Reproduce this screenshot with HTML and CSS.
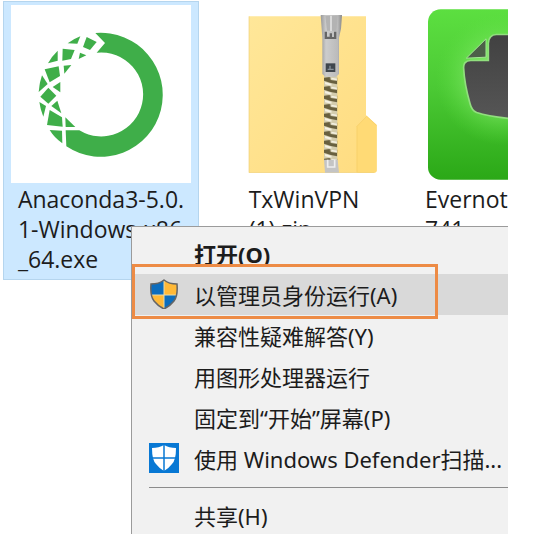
FILE: index.html
```html
<!DOCTYPE html>
<html lang="zh-CN">
<head>
<meta charset="utf-8">
<title>打开</title>
<link rel="stylesheet" href="styles.css">
</head>
<body>
<main class="desktop">
  <div class="files">
    <a class="file file--selected" href="#">
      <span class="file__art file__art--card">
        <svg width="180" height="178" viewBox="33 15 540 534" aria-hidden="true">
          <g fill="#3fae49">
            <path d="M286 99A186 186 0 1 1 199 439L197 391L238 391A126 126 0 1 0 290 158L315 129z"/>
            <path d="M203 130Q220 117 241 109L232 131z"/>
            <path d="M260 111L290 126L270 150L249 141z"/>
            <path d="M240 158L259 166L236 177z"/>
            <path d="M188 146L224 150L213 177L187 182z"/>
            <path d="M173 152V182L144 190Q155 169 173 152z"/>
            <path d="M191 197L214 195L193 221z"/>
            <path d="M134 208L176 199L180 228L149 247z"/>
            <path d="M126 226L143 252L116 276Q118 248 126 226z"/>
            <path d="M181 246V277L158 261z"/>
            <path d="M145 263L169 287L145 311L121 290z"/>
            <path d="M118 306L138 318L130 350Q121 329 118 306z"/>
            <path d="M172 302L184 340L154 318z"/>
            <path d="M149 330L186 352L188 380L141 375z"/>
            <path d="M196 352L226 381L197 381z"/>
            <path d="M149 390L186 392L187 430Q163 413 149 390z"/>
          </g>
        </svg>
      </span>
      <span class="file__name">Anaconda3-5.0.<br>1-Windows-x86<br>_64.exe</span>
    </a>
    <a class="file" href="#">
      <span class="file__art">
        <svg width="146" height="158" viewBox="3 44 438 474" aria-hidden="true">
          <defs>
            <linearGradient id="folder" x1="0" y1="0" x2="1" y2="1">
              <stop offset="0" stop-color="#ffe799"/><stop offset="1" stop-color="#ffdc80"/>
            </linearGradient>
            <linearGradient id="metal" x1="0" y1="0" x2="1" y2="0">
              <stop offset="0" stop-color="#999"/><stop offset=".25" stop-color="#ccc"/><stop offset=".8" stop-color="#bbb"/><stop offset="1" stop-color="#888"/>
            </linearGradient>
            <pattern id="teeth" x="282" y="230" width="40" height="27" patternUnits="userSpaceOnUse">
              <path d="M0 0H40V27H0z" fill="#d4cdae"/>
              <path d="M0 2L18 0L20 9L40 12V22L20 18L0 11z" fill="#68603f"/>
              <path d="M3 15L22 20V26L3 22z" fill="#f5f2e4"/>
              <path d="M22 2L39 5V10L22 7z" fill="#f5f2e4"/>
            </pattern>
          </defs>
          <path d="M57 48H408V345L440 373V510Q440 517 432 517H57z" fill="url(#folder)"/>
          <path d="M380 517V378L410 347L440 375V510Q440 517 432 517z" fill="#ffda75"/>
          <path d="M381 515V378L410 348L439 375" fill="none" stroke="#f5cd68" stroke-width="2"/>
          <path d="M57 48V517H432" fill="none" stroke="#efcf77" stroke-width="2"/>
          <path d="M282 225H322V480H282z" fill="url(#teeth)"/>
          <path d="M282 478H323L327 517H285z" fill="#c4c4c4"/>
          <path d="M293 478V500H314V478" fill="none" stroke="#eee" stroke-width="5"/>
          <path d="M272 44H336L333 85L327 112V221L318 229H286L277 221V112z" fill="url(#metal)"/>
          <path d="M286 46H323L319 91H291z" fill="#b3b3b3"/>
          <path d="M303 46V92" stroke="#e2e2e2" stroke-width="5"/>
          <path d="M284 94H291V109H299V99H306V110H312V94H319V116H284z" fill="#666"/>
          <path d="M287 189H316V215H287z" fill="#3f464d"/>
          <path d="M293 207H311M300 196V207" stroke="#87909a" stroke-width="4"/>
        </svg>
      </span>
      <span class="file__name">TxWinVPN<br>(1).zip</span>
    </a>
    <a class="file" href="#">
      <span class="file__art">
        <svg width="158" height="171" viewBox="57 27 474 512" aria-hidden="true">
          <defs>
            <linearGradient id="leaf" x1="0" y1="0" x2="0" y2="1">
              <stop offset="0" stop-color="#5cdf40"/><stop offset=".45" stop-color="#4cca35"/><stop offset="1" stop-color="#2ba817"/>
            </linearGradient>
            <radialGradient id="glow" cx="280" cy="235" r="200" gradientUnits="userSpaceOnUse">
              <stop offset="0" stop-color="#a3f58a" stop-opacity=".9"/><stop offset=".45" stop-color="#8aec70" stop-opacity=".65"/><stop offset="1" stop-color="#5cdf40" stop-opacity="0"/>
            </radialGradient>
            <linearGradient id="head" x1="0" y1="0" x2="0" y2="1">
              <stop offset="0" stop-color="#414141"/><stop offset="1" stop-color="#565656"/>
            </linearGradient>
          </defs>
          <rect x="57" y="27" width="474" height="512" rx="38" fill="url(#leaf)"/>
          <rect x="57" y="27" width="474" height="512" rx="38" fill="url(#glow)"/>
          <path d="M172 174L231 116V171z" fill="#4c6048" stroke="#a4e994" stroke-width="3"/>
          <path d="M164 205Q162 182 185 181H238V130Q239 104 262 103H340V359Q245 351 203 337Q188 331 183 310Q166 250 164 205z" fill="url(#head)" stroke="#91df7e" stroke-width="5"/>
        </svg>
      </span>
      <span class="file__name file__name--long">Evernot<br>741</span>
    </a>
  </div>

  <div class="menu" role="menu">
    <button class="menu__item menu__item--default" role="menuitem">打开(O)</button>
    <div class="menu__row">
      <button class="menu__item menu__item--active" role="menuitem">
        <svg class="menu__icon" width="30" height="30" viewBox="0 0 30 30" aria-hidden="true">
          <path d="M15 1Q20 5 28 5Q29 17 25 22Q21 27 15 30Q9 27 5 22Q1 17 2 5Q10 5 15 1z" fill="#ffb937"/>
          <path d="M15 1V16H2.500Q1.500 12 2 5Q10 5 15 1zM15 16H27.500Q26 24 15 30z" fill="#0c6dbd"/>
          <path d="M15 1V30M2 16H28" stroke="#e5dcae" stroke-width="1"/>
          <path d="M15 1Q20 5 28 5Q29 17 25 22Q21 27 15 30Q9 27 5 22Q1 17 2 5Q10 5 15 1z" fill="none" stroke="#656565" stroke-width="1.500"/>
        </svg>
        以管理员身份运行(A)
      </button>
      <span class="menu__marker"></span>
    </div>
    <button class="menu__item" role="menuitem">兼容性疑难解答(Y)</button>
    <button class="menu__item" role="menuitem">用图形处理器运行</button>
    <button class="menu__item" role="menuitem">固定到“开始”屏幕(P)</button>
    <button class="menu__item" role="menuitem">
      <svg class="menu__icon" width="30" height="30" viewBox="0 0 30 30" aria-hidden="true">
        <path d="M0 0H30V30H0z" fill="#0878d4"/>
        <path d="M15 2Q20 5 27 5Q27 17 23 21Q20 25 15 28Q10 25 7 21Q3 17 3 5Q10 5 15 2z" fill="#fff"/>
        <path d="M15 1V29M2 15H28" stroke="#0878d4" stroke-width="1.500"/>
      </svg>
      使用 Windows Defender扫描...
    </button>
    <hr class="menu__line">
    <button class="menu__item" role="menuitem">共享(H)</button>
  </div>
</main>
</body>
</html>
```

FILE: styles.css
```css
* {
  box-sizing: border-box;
}

body {
  margin: 0;
  padding: 0 34px 8px 0;
  background: #fff;
  color: #1c1c1c;
  font-family: "Open Sans", "Noto Sans CJK SC", sans-serif;
  font-size: 23px;
}

.desktop {
  position: relative;
  min-height: calc(100vh - 8px);
  overflow: hidden;
}

.files {
  position: absolute;
  inset: 1px 0 auto 3px;
  display: grid;
  grid-template-columns: repeat(3, 196px);
  gap: 7px;
}

.file {
  padding: 3px 7px 5px;
  border: 1px solid transparent;
  color: #1c1c1c;
  line-height: 30px;
  text-decoration: none;
}

.file--selected {
  background: #cce8ff;
  border-color: #b5d5ee;
}

.file__art {
  display: flex;
  align-items: center;
  justify-content: center;
  height: 178px;
  margin-bottom: 1px;
}

.file__art--card {
  background: #fff;
}

.file__name {
  display: block;
  width: fit-content;
  margin: 0 auto;
  white-space: nowrap;
}

.file__name--long {
  margin-left: 8px;
}

.menu {
  position: absolute;
  inset: 226px 0 auto 131px;
  padding: 6px 0;
  background: #f1f1f1;
  border: solid #9b9b9b;
  border-width: 1px 0 1px 1px;
  font-family: "Noto Sans", "Noto Sans CJK SC", sans-serif;
  font-size: 22px;
}

.menu__row {
  position: relative;
}

.menu__item {
  position: relative;
  display: block;
  width: 100%;
  height: 41px;
  padding: 0 0 2px 62px;
  border: 0;
  background: none;
  color: inherit;
  font: inherit;
  text-align: left;
  white-space: nowrap;
}

.menu__item--default {
  font-weight: 700;
}

.menu__item--active {
  background: #d9d9d9;
}

.menu__icon {
  position: absolute;
  top: 5px;
  left: 17px;
}

.menu__marker {
  position: absolute;
  inset: -10px 70px -4px 0;
  border: 3px solid #ed8b45;
  pointer-events: none;
}

.menu__line {
  height: 1px;
  margin: 8px 0 7px 17px;
  border: 0;
  background: #8c8c8c;
}
```
